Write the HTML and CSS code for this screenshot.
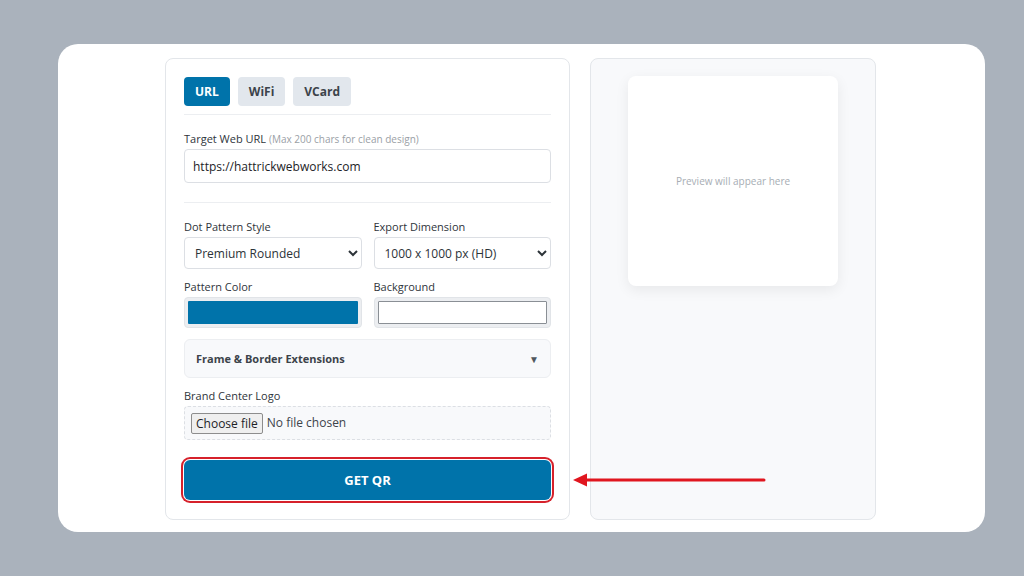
FILE: index.html
```html
<!DOCTYPE html>
<html lang="en">
<head>
  <meta charset="UTF-8">
  <meta name="viewport" content="width=device-width, initial-scale=1.0">
  <title>QR Generator</title>
  <link rel="stylesheet" href="styles.css">
</head>
<body>
  <div class="frame">
    <div class="generator">
      <!-- Form -->
      <div class="panel form-panel">
        <div class="tabs">
          <button class="tab active">URL</button>
          <button class="tab">WiFi</button>
          <button class="tab">VCard</button>
        </div>

        <div class="field url-field">
          <label>Target Web URL <span class="hint">(Max 200 chars for clean design)</span></label>
          <input type="text" class="text-input" value="https://hattrickwebworks.com">
        </div>

        <div class="grid-2">
          <div class="field">
            <label>Dot Pattern Style</label>
            <select class="select">
              <option>Premium Rounded</option>
            </select>
          </div>
          <div class="field">
            <label>Export Dimension</label>
            <select class="select">
              <option>1000 x 1000 px (HD)</option>
            </select>
          </div>
          <div class="field">
            <label>Pattern Color</label>
            <input type="color" class="color" value="#0073aa">
          </div>
          <div class="field">
            <label>Background</label>
            <input type="color" class="color light" value="#ffffff">
          </div>
        </div>

        <details class="extras">
          <summary>Frame &amp; Border Extensions <span class="caret">▼</span></summary>
        </details>

        <div class="field">
          <label>Brand Center Logo</label>
          <label class="file-box">
            <input type="file" class="file">
            <span class="file-btn">Choose file</span>
            <span class="file-name">No file chosen</span>
          </label>
        </div>

        <button class="get-qr">GET QR</button>
      </div>

      <!-- Preview -->
      <div class="panel preview-panel">
        <div class="preview">Preview will appear here</div>
      </div>
    </div>

    <!-- Flecha de anotación -->
    <svg class="arrow" width="200" height="16" viewBox="0 0 200 16">
      <line x1="12" y1="8" x2="192" y2="8" stroke="#e0161f" stroke-width="3" stroke-linecap="round"/>
      <polygon points="1,8 15,1.5 15,14.5" fill="#e0161f"/>
    </svg>
  </div>
</body>
</html>
```

FILE: styles.css
```css
* {
  box-sizing: border-box;
}

body {
  margin: 0;
  padding: 44px 39px 44px 58px;
  height: 576px;
  background: #aab2bc;
  font-family: "Open Sans", "Noto Sans", sans-serif;
  color: #3c434a;
  overflow: hidden;
}

/* Marco blanco */
.frame {
  position: relative;
  height: 488px;
  background: #fff;
  border-radius: 20px;
  padding-top: 14px;
}

.generator {
  display: flex;
  gap: 20px;
  width: 711px;
  margin-left: 107px;
}

.panel {
  border: 1px solid #e3e6ea;
  border-radius: 8px;
  height: 462px;
}

.form-panel {
  width: 405px;
  padding: 18px 18px 0;
  background: #fff;
}

.preview-panel {
  width: 286px;
  background: #f8f9fb;
  padding-top: 17px;
}

/* Pestañas */
.tabs {
  display: flex;
  gap: 8px;
  padding-bottom: 8px;
  border-bottom: 1px solid #eceef1;
}

.tab {
  height: 29px;
  padding: 0 11px;
  border: none;
  border-radius: 4px;
  background: #e2e7ed;
  color: #3c434a;
  font-family: inherit;
  font-size: 12px;
  font-weight: 700;
}

.tab.active {
  background: #0073aa;
  color: #fff;
}

.field label {
  display: block;
  font-size: 11px;
  line-height: 14px;
  font-weight: 500;
  color: #2f353b;
  margin-bottom: 3px;
}

.hint {
  font-size: 10px;
  font-weight: 400;
  color: #9aa0a6;
}

.url-field {
  padding: 17px 0 19px;
  border-bottom: 1px solid #eceef1;
}

.text-input {
  display: block;
  width: 100%;
  height: 34px;
  padding: 0 8px;
  border: 1px solid #dcdfe4;
  border-radius: 4px;
  font-family: inherit;
  font-size: 12px;
  color: #1d2327;
}

.grid-2 {
  display: grid;
  grid-template-columns: 1fr 1fr;
  column-gap: 12px;
  row-gap: 11px;
  margin-top: 17px;
}

.select {
  display: block;
  width: 100%;
  height: 32px;
  padding: 0 6px;
  border: 1px solid #dcdfe4;
  border-radius: 4px;
  background: #fff;
  font-family: inherit;
  font-size: 12px;
  color: #2c3338;
}

.color {
  display: block;
  width: 100%;
  height: 31px;
  padding: 3px;
  margin-top: 2px;
  border: 1px solid #e1e4e8;
  border-radius: 4px;
  background: #eceef1;
  -webkit-appearance: none;
  appearance: none;
}

.color::-webkit-color-swatch-wrapper {
  padding: 0;
}

.color::-webkit-color-swatch {
  border: none;
  border-radius: 1px;
}

.color.light::-webkit-color-swatch {
  border: 1px solid #8a8f95;
}

/* Extensiones */
.extras {
  margin: 11px 0 11px;
  height: 39px;
  border: 1px solid #eceef1;
  border-radius: 6px;
  background: #f8f9fb;
}

.extras summary {
  display: flex;
  justify-content: space-between;
  align-items: center;
  height: 37px;
  padding: 0 11px;
  list-style: none;
  font-size: 11px;
  font-weight: 700;
  color: #3c434a;
}

.extras summary::-webkit-details-marker {
  display: none;
}

.caret {
  font-size: 10px;
  color: #50575e;
}

/* Subida de logo */
.field .file-box {
  height: 34px;
  padding: 0 6px;
  margin: 0;
  display: flex;
  align-items: center;
  border: 1px dashed #dcdfe4;
  border-radius: 4px;
  background: #f8f9fb;
  font-size: 12px;
  font-weight: 400;
  color: #3c434a;
}

.file {
  display: none;
}

.file-btn {
  height: 21px;
  line-height: 19px;
  padding: 0 4px;
  margin-right: 4px;
  border: 1px solid #8d8d8d;
  border-radius: 2px;
  background: #efefef;
  color: #1d2327;
}

/* Botón principal */
.get-qr {
  display: block;
  width: 100%;
  height: 40px;
  margin-top: 20px;
  border: none;
  border-radius: 6px;
  background: #0073aa;
  color: #fff;
  font-family: inherit;
  font-size: 13px;
  font-weight: 700;
  box-shadow: 0 0 0 1px #fff, 0 0 0 3px #d6212b;
}

/* Vista previa */
.preview {
  width: 210px;
  height: 210px;
  margin: 0 auto;
  display: flex;
  align-items: center;
  justify-content: center;
  background: #fff;
  border-radius: 8px;
  box-shadow: 0 4px 14px rgba(0, 0, 0, 0.07);
  font-size: 10px;
  color: #a7adb4;
}

.arrow {
  position: absolute;
  left: 514px;
  top: 428px;
}
```
